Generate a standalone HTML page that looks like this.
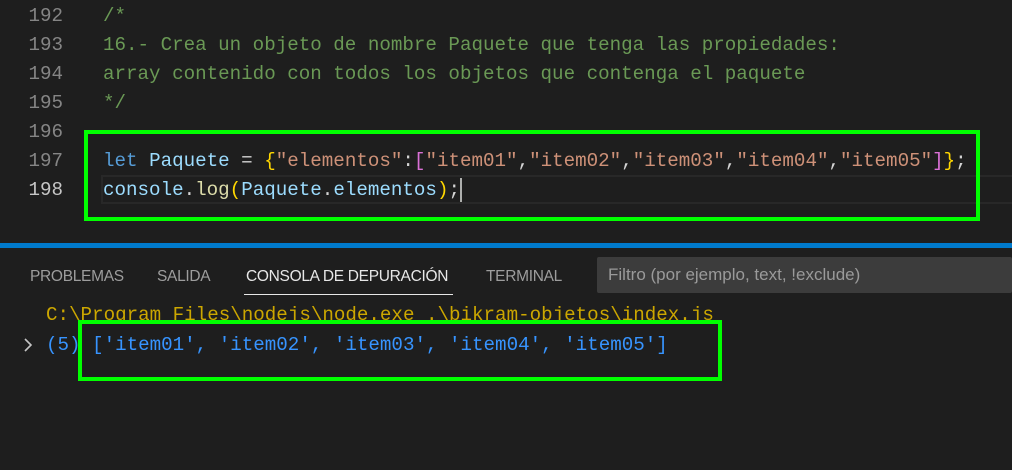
<!DOCTYPE html>
<html><head><meta charset="utf-8"><style>
html,body{margin:0;padding:0;width:1012px;height:470px;overflow:hidden;background:#1e1e1e}
.m{font-family:"Liberation Mono",monospace;font-size:19.2px;position:absolute;white-space:pre;line-height:29px}
.ln{position:absolute;left:0;width:63px;text-align:right;color:#858585}
.c{color:#6a9955}.k{color:#569cd6}.v{color:#9cdcfe}.s{color:#ce9178}.y{color:#ffd700}.p{color:#da70d6}.w{color:#d4d4d4}.f{color:#dcdcaa}
.box{position:absolute;border:4px solid #00ff00;box-sizing:border-box}
.tab{position:absolute;top:268px;font-family:"Liberation Sans",sans-serif;font-size:15.5px;color:#9d9d9d;letter-spacing:-0.3px}
</style></head><body>
<div class="m" style="top:2px;left:0;width:1012px">
<div class="ln" style="top:0">192</div><div class="ln" style="top:29px">193</div><div class="ln" style="top:58px">194</div><div class="ln" style="top:87px">195</div><div class="ln" style="top:116px">196</div><div class="ln" style="top:145px">197</div><div class="ln" style="top:174px;color:#c6c6c6">198</div>
<div style="position:absolute;left:101px;top:174px;width:911px;height:25px;border:2px solid #282828;margin-top:-1px"></div>
<div style="position:absolute;left:103px;top:0" class="c">/*</div>
<div style="position:absolute;left:103px;top:29px" class="c">16.- Crea un objeto de nombre Paquete que tenga las propiedades:</div>
<div style="position:absolute;left:103px;top:58px" class="c">array contenido con todos los objetos que contenga el paquete</div>
<div style="position:absolute;left:103px;top:87px" class="c">*/</div>
<div style="position:absolute;left:103px;top:145px"><span class="k">let</span><span class="w"> </span><span class="v">Paquete</span><span class="w"> = </span><span class="y">{</span><span class="s">"elementos"</span><span class="w">:</span><span class="p">[</span><span class="s">"item01"</span><span class="w">,</span><span class="s">"item02"</span><span class="w">,</span><span class="s">"item03"</span><span class="w">,</span><span class="s">"item04"</span><span class="w">,</span><span class="s">"item05"</span><span class="p">]</span><span class="y">}</span><span class="w">;</span></div>
<div style="position:absolute;left:103px;top:174px"><span class="v">console</span><span class="w">.</span><span class="f">log</span><span class="y">(</span><span class="v">Paquete</span><span class="w">.</span><span class="v">elementos</span><span class="y">)</span><span class="w">;</span></div>
<div style="position:absolute;left:460px;top:176px;width:2px;height:24px;background:#aeafad"></div>
</div>
<div class="box" style="left:84px;top:130px;width:896px;height:91px"></div>
<div style="position:absolute;left:0;top:243px;width:1012px;height:5px;background:#007acc"></div>
<div class="tab" style="left:30px">PROBLEMAS</div>
<div class="tab" style="left:157px">SALIDA</div>
<div class="tab" style="left:246px;color:#e7e7e7">CONSOLA DE DEPURACIÓN</div>
<div style="position:absolute;left:244px;top:294px;width:209px;height:1px;background:#e7e7e7"></div>
<div class="tab" style="left:486px">TERMINAL</div>
<div style="position:absolute;left:597px;top:257px;width:415px;height:36px;background:#3c3c3c;border-radius:2px"></div>
<div class="tab" style="left:608px;top:265px;font-size:17px;color:#9a9a9a;letter-spacing:0">Filtro (por ejemplo, text, !exclude)</div>
<svg style="position:absolute;left:22px;top:337px" width="12" height="16" viewBox="0 0 12 16"><path d="M3 2 L9 8 L3 14" fill="none" stroke="#c5c5c5" stroke-width="1.6"/></svg>
<div class="m" style="left:46px;top:301px;color:#cca700">C:\Program Files\nodejs\node.exe .\bikram-objetos\index.js</div>
<div class="m" style="left:46px;top:331px;color:#3794ff">(5) ['item01', 'item02', 'item03', 'item04', 'item05']</div>
<div class="box" style="left:78px;top:320px;width:644px;height:61px"></div>
</body></html>
